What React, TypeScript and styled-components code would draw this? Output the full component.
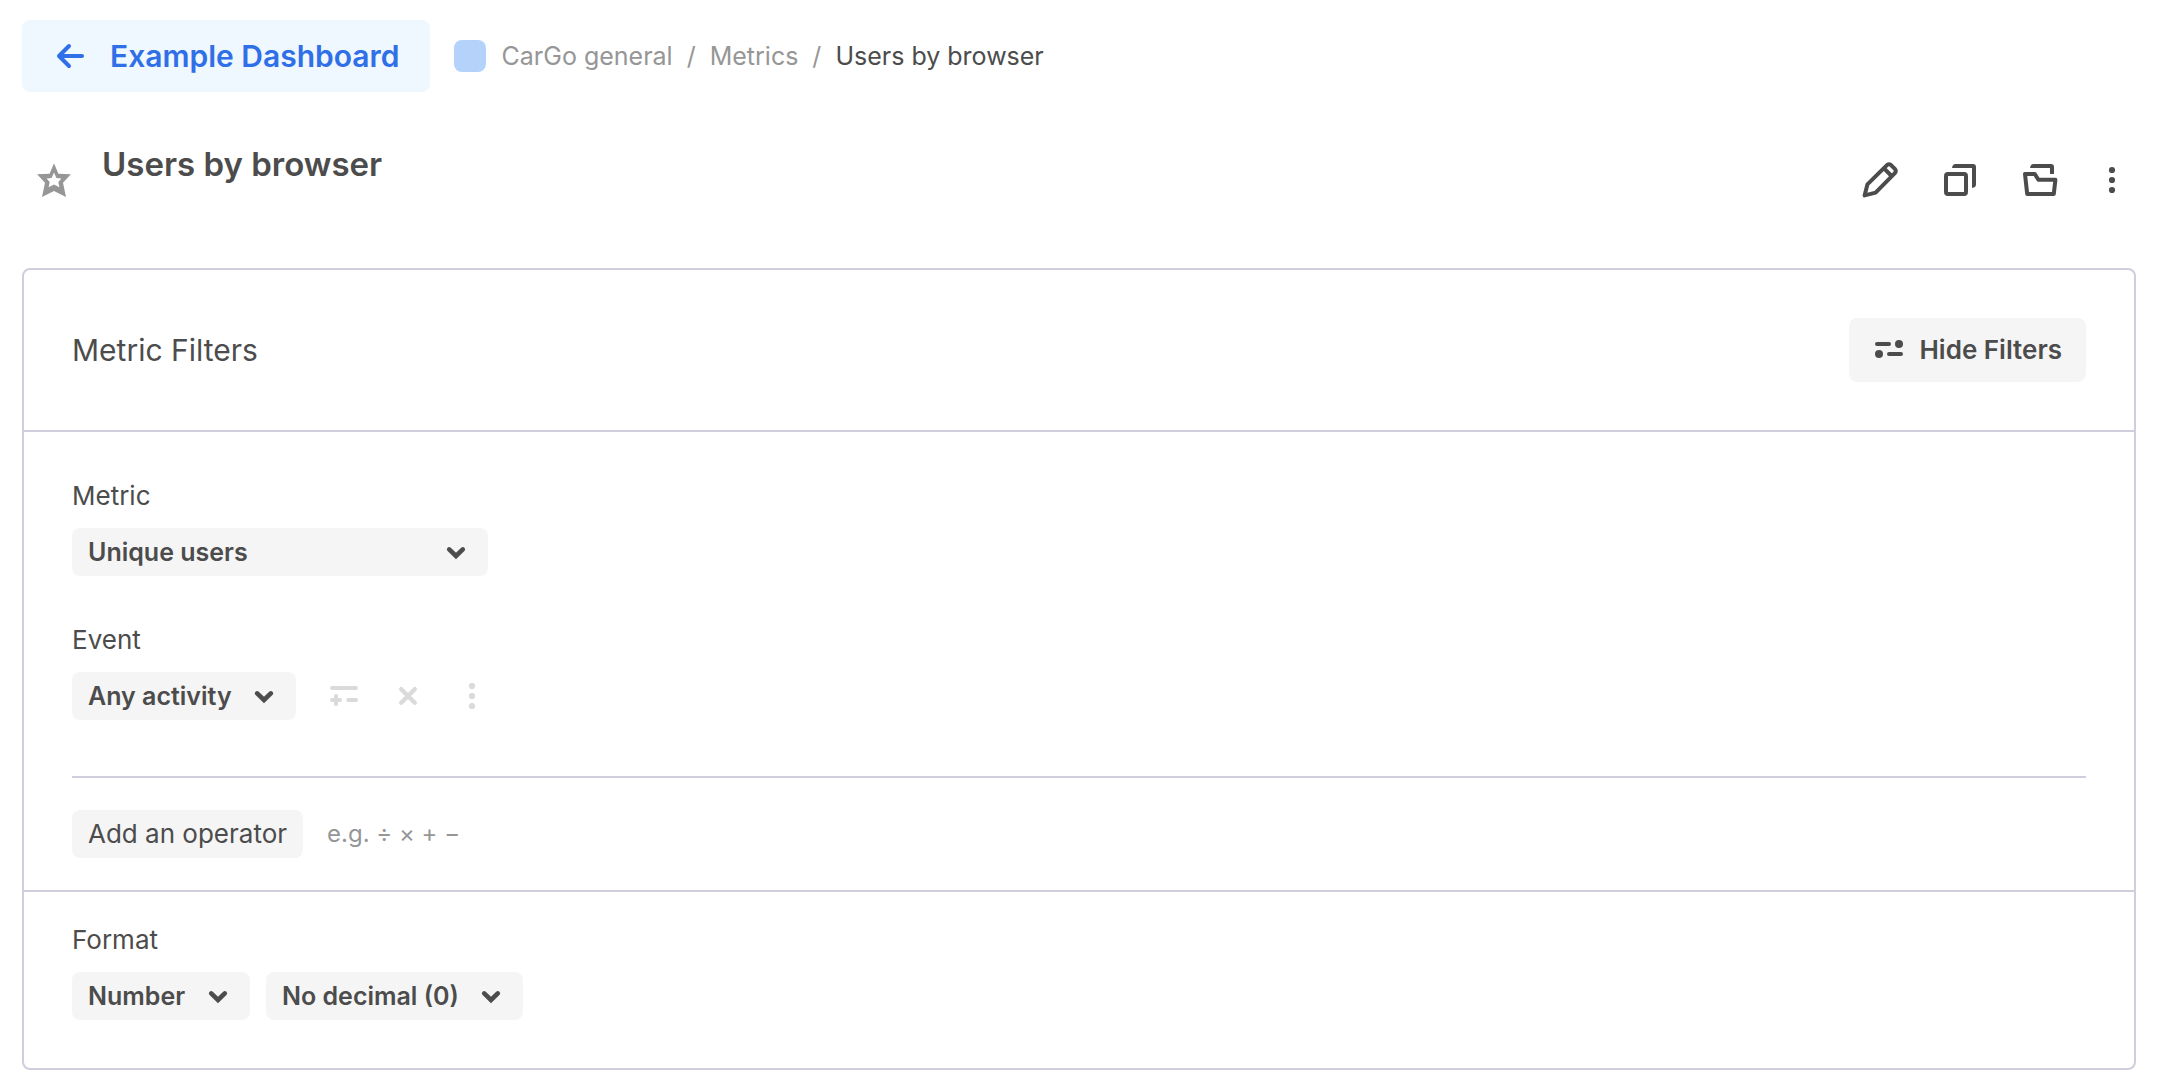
import React from "react";
import styled, { createGlobalStyle } from "styled-components";

const color = {
  text: "#4c4c4c",
  muted: "#969696",
  faint: "#dadada",
  blue: "#2f6fe7",
  blueTint: "#eff7ff",
  blueSoft: "#b5d2fb",
  fill: "#f5f5f5",
  line: "#d0cddc",
};

const GlobalStyle = createGlobalStyle`
  *, *::before, *::after { box-sizing: border-box; }
  body {
    margin: 0;
    background: #fff;
    color: ${color.text};
    font-family: Inter, "Liberation Sans", sans-serif;
    font-size: 26px;
    line-height: 32px;
  }
  button, select { font: inherit; color: inherit; }
  svg { display: block; flex: none; }
`;

const Page = styled.div`
  padding: 20px 24px 16px 22px;
`;

const TopBar = styled.nav`
  display: flex;
  align-items: center;
  gap: 24px;
`;

const BackLink = styled.a`
  display: flex;
  align-items: center;
  gap: 24px;
  height: 72px;
  padding: 0 30px 0 32px;
  border-radius: 8px;
  background: ${color.blueTint};
  color: ${color.blue};
  font-size: 30px;
  font-weight: 600;
  text-decoration: none;
`;

const Crumbs = styled.ol`
  display: flex;
  align-items: center;
  gap: 14px;
  margin: 0;
  padding: 0;
  list-style: none;
  color: ${color.muted};
  font-size: 25px;
`;

const Swatch = styled.span`
  width: 32px;
  height: 32px;
  margin-right: 16px;
  border-radius: 8px;
  background: ${color.blueSoft};
`;

const Crumb = styled.li`
  display: flex;
  align-items: center;
`;

const CrumbLink = styled.a`
  color: inherit;
  text-decoration: none;
`;

const CurrentCrumb = styled.span`
  color: ${color.text};
`;

const Header = styled.header`
  display: flex;
  align-items: center;
  height: 176px;
  padding: 0 12px;
`;

const Title = styled.h1`
  flex: 1;
  margin: 0 0 32px 28px;
  font-size: 33px;
  line-height: 40px;
  font-weight: 600;
`;

const Actions = styled.div`
  display: flex;
  align-items: center;
  gap: 40px;
`;

const IconButton = styled.button<{ $tone?: string }>`
  display: flex;
  padding: 0;
  border: 0;
  background: none;
  color: ${(p) => p.$tone ?? color.text};
  cursor: pointer;
`;

const Panel = styled.main`
  border: 2px solid ${color.line};
  border-radius: 8px;
`;

const PanelHeader = styled.div`
  display: flex;
  align-items: center;
  justify-content: space-between;
  padding: 48px;
  border-bottom: 2px solid ${color.line};
`;

const PanelTitle = styled.h2`
  margin: 0;
  font-size: 30px;
  font-weight: 400;
`;

const HideButton = styled.button`
  display: flex;
  align-items: center;
  gap: 14px;
  height: 64px;
  padding: 0 24px;
  border: 0;
  border-radius: 8px;
  background: ${color.fill};
  font-weight: 600;
  cursor: pointer;
`;

const Fields = styled.section`
  display: grid;
  gap: 48px;
  padding: 48px 48px 56px;
`;

const Field = styled.div`
  display: grid;
  gap: 16px;
`;

const Row = styled.div<{ $gap: number }>`
  display: flex;
  align-items: center;
  gap: ${(p) => p.$gap}px;
`;

const Operator = styled.section`
  display: flex;
  align-items: center;
  gap: 24px;
  margin: 0 48px;
  padding: 32px 0;
  border-top: 2px solid ${color.line};
`;

const OperatorButton = styled.button`
  height: 48px;
  padding: 0 16px;
  border: 0;
  border-radius: 8px;
  background: ${color.fill};
  cursor: pointer;
`;

const Hint = styled.span`
  color: ${color.muted};
  font-size: 24px;
`;

const Format = styled.section`
  padding: 32px 48px 48px;
  border-top: 2px solid ${color.line};
`;

const SelectBox = styled.div<{ $wide?: boolean }>`
  position: relative;
  width: ${(p) => (p.$wide ? "416px" : "auto")};
`;

const Select = styled.select`
  display: block;
  appearance: none;
  width: 100%;
  height: 48px;
  padding: 0 64px 0 16px;
  border: 0;
  border-radius: 8px;
  background: ${color.fill};
  font-size: 25px;
  font-weight: 600;
  cursor: pointer;
`;

const Chevron = styled.svg`
  position: absolute;
  top: 12px;
  right: 20px;
  pointer-events: none;
`;

function Dropdown({ id, value, label, wide }: { id: string; value: string; label?: string; wide?: boolean }) {
  return (
    <SelectBox $wide={wide}>
      <Select id={id} aria-label={label} defaultValue={value}>
        <option>{value}</option>
      </Select>
      <Chevron width="24" height="24" viewBox="0 0 24 24" fill="none" stroke={color.text} strokeWidth="4.6" strokeLinecap="round" aria-hidden="true">
        <path d="M5.2 9.4 12 16l6.8-6.6" />
      </Chevron>
    </SelectBox>
  );
}

const ArrowLeft = () => (
  <svg width="32" height="32" viewBox="0 0 32 32" fill="none" stroke="currentColor" strokeWidth="4" strokeLinecap="round" strokeLinejoin="round" aria-hidden="true">
    <path d="M28 16H5M15 6 5 16l10 10" />
  </svg>
);

const Star = () => (
  <svg width="40" height="40" viewBox="0 0 40 40" fill="currentColor" fillRule="evenodd" aria-hidden="true">
    <path d="M20 3.3 24.4 13.7 36.9 14.2 29 22.7 32 37 20 31 8 37 11 22.7 3.1 14.2 15.6 13.7zM20 12.6 17.6 18 12.6 18.4 15.7 21.9 14.6 27.2 20 24.6 25.4 27.2 24.3 21.9 27.4 18.4 22.4 18z" />
  </svg>
);

const Pencil = () => (
  <svg width="40" height="40" viewBox="0 0 40 40" fill="none" stroke="currentColor" strokeWidth="4" strokeLinejoin="round" aria-hidden="true">
    <path d="M4.6 35.4l2.8-11L27.2 4.9q1.8-1.3 3.6 0l4.3 4.3q1.3 1.8 0 3.6L15.6 32.6z" />
    <path d="M24 8.4l7.6 7.6" />
  </svg>
);

const Copy = () => (
  <svg width="40" height="40" viewBox="0 0 40 40" fill="currentColor" aria-hidden="true">
    <rect x="6" y="14" width="20" height="20" rx="2" fill="none" stroke="currentColor" strokeWidth="4" />
    <path d="M12 8q.5-4 3.5-4H33q3 0 3 3v17.5q0 3-4 3.5V8z" />
  </svg>
);

const Folder = () => (
  <svg width="40" height="40" viewBox="0 0 40 40" fill="currentColor" aria-hidden="true">
    <path d="M5 14h9.8l3.6 5.8h17L33.8 34H7.2z" fill="none" stroke="currentColor" strokeWidth="4" strokeLinejoin="round" />
    <path d="M10 8q.5-4 3.5-4H31q3 0 3 3v7h-4V8z" />
  </svg>
);

const Dots = ({ width }: { width: number }) => (
  <svg width={width} height="32" viewBox={`${-width / 2} 0 ${width} 32`} fill="currentColor" aria-hidden="true">
    <circle cy="6" r="3.1" />
    <circle cy="16" r="3.1" />
    <circle cy="26" r="3.1" />
  </svg>
);

const Sliders = () => (
  <svg width="32" height="32" viewBox="0 0 32 32" fill="currentColor" aria-hidden="true">
    <rect x="2" y="8" width="16" height="4" rx="2" />
    <circle cx="26" cy="10" r="4" />
    <circle cx="6" cy="20" r="4" />
    <rect x="14" y="18" width="16" height="4" rx="2" />
  </svg>
);

const AddFilter = () => (
  <svg width="32" height="32" viewBox="0 0 32 32" fill="none" stroke="currentColor" strokeWidth="4" strokeLinecap="round" aria-hidden="true">
    <path d="M4 8h24M4 20h8M8 16v8M20.3 20H28" />
  </svg>
);

const Close = () => (
  <svg width="32" height="32" viewBox="0 0 32 32" fill="none" stroke="currentColor" strokeWidth="4.4" strokeLinecap="round" aria-hidden="true">
    <path d="M9.2 9.2l13.6 13.6M22.8 9.2 9.2 22.8" />
  </svg>
);

export default function App() {
  return (
    <>
      <GlobalStyle />
      <Page>
        <TopBar aria-label="Breadcrumb">
          <BackLink href="#dashboard">
            <ArrowLeft />
            Example Dashboard
          </BackLink>
          <Crumbs>
            <Crumb>
              <Swatch />
              <CrumbLink href="#general">CarGo general</CrumbLink>
            </Crumb>
            <Crumb aria-hidden="true">/</Crumb>
            <Crumb>
              <CrumbLink href="#metrics">Metrics</CrumbLink>
            </Crumb>
            <Crumb aria-hidden="true">/</Crumb>
            <Crumb>
              <CurrentCrumb aria-current="page">Users by browser</CurrentCrumb>
            </Crumb>
          </Crumbs>
        </TopBar>

        <Header>
          <IconButton type="button" aria-label="Add to favorites" $tone={color.muted}>
            <Star />
          </IconButton>
          <Title>Users by browser</Title>
          <Actions>
            <IconButton type="button" aria-label="Edit"><Pencil /></IconButton>
            <IconButton type="button" aria-label="Duplicate"><Copy /></IconButton>
            <IconButton type="button" aria-label="Move to folder"><Folder /></IconButton>
            <IconButton type="button" aria-label="More actions"><Dots width={24} /></IconButton>
          </Actions>
        </Header>

        <Panel>
          <PanelHeader>
            <PanelTitle>Metric Filters</PanelTitle>
            <HideButton type="button">
              <Sliders />
              Hide Filters
            </HideButton>
          </PanelHeader>

          <Fields>
            <Field>
              <label htmlFor="metric">Metric</label>
              <Dropdown id="metric" value="Unique users" wide />
            </Field>
            <Field>
              <label htmlFor="event">Event</label>
              <Row $gap={32}>
                <Dropdown id="event" value="Any activity" />
                <IconButton type="button" aria-label="Add filter" $tone={color.faint}><AddFilter /></IconButton>
                <IconButton type="button" aria-label="Remove event" $tone={color.faint}><Close /></IconButton>
                <IconButton type="button" aria-label="More event options" $tone={color.faint}><Dots width={32} /></IconButton>
              </Row>
            </Field>
          </Fields>

          <Operator>
            <OperatorButton type="button">Add an operator</OperatorButton>
            <Hint>e.g. ÷ × + −</Hint>
          </Operator>

          <Format>
            <Field>
              <label htmlFor="format">Format</label>
              <Row $gap={16}>
                <Dropdown id="format" value="Number" />
                <Dropdown id="decimals" value="No decimal (0)" label="Decimal places" />
              </Row>
            </Field>
          </Format>
        </Panel>
      </Page>
    </>
  );
}
